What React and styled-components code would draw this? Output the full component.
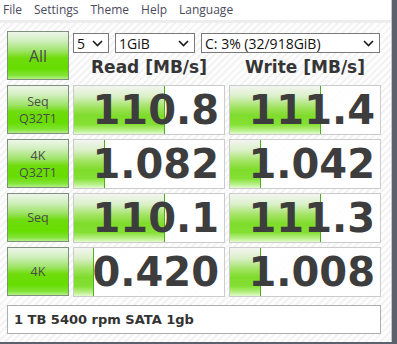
import React from "react";
import styled, { createGlobalStyle } from "styled-components";

const GlobalStyle = createGlobalStyle`
    html, body {
        margin: 0;
        padding: 0;
        background-color: #5c626d;
    }
`

const Window = styled.div`
    width: 391px;
    height: 342px;
    border-right: 1px solid #c4c8ce;
    background-color: #f9f9f9;
    display: flex;
    flex-direction: column;
    overflow: hidden;
`
const MenuBar = styled.div`
    height: 20px;
    display: flex;
    align-items: center;
    gap: 12px;
    padding-left: 3px;
    background-color: #fff;
    border-bottom: 3px solid #ededed;
    font-family: "Open Sans", sans-serif;
    font-size: 12px;
    color: #4a4a5e;
`
const MenuItem = styled.span`
    line-height: 20px;
`
const Main = styled.div`
    flex: 1;
    padding: 8px 0 0 7px;
    background: repeating-linear-gradient(135deg, #fdfdfd 0px, #fdfdfd 3px, #f3f3f3 3px, #f3f3f3 5px);
    display: grid;
    grid-template-columns: 62px 152px 152px;
    grid-auto-rows: 50px;
    column-gap: 4px;
    row-gap: 4px;
    align-content: start;
`
const Top = styled.div`
    grid-column: 2 / 4;
    display: grid;
    grid-template-columns: 152px 152px;
    grid-template-rows: 24px 26px;
    column-gap: 4px;
`
const Selects = styled.div`
    grid-column: 1 / 3;
    display: flex;
    gap: 6px;
    padding-top: 2px;
`
const Select = styled.div`
    width: ${p => p.$w}px;
    height: 20px;
    box-sizing: border-box;
    border: 1px solid #7a7a7a;
    background-color: #fff;
    display: flex;
    align-items: center;
    justify-content: space-between;
    padding: 0 5px 0 3px;
    font-family: "Open Sans", sans-serif;
    font-size: 14px;
    color: #111;
`
const Header = styled.div`
    text-align: center;
    font-family: "DejaVu Sans", sans-serif;
    font-weight: bold;
    font-size: 17px;
    line-height: 24px;
    color: #353535;
`
const TestButton = styled.div`
    height: 49px;
    box-sizing: border-box;
    border: 1px solid #7e8f7c;
    background: linear-gradient(to bottom, #eef6ea 0%, #d2efbf 18%, #9fe46a 40%, #6fdc0c 55%, #66dd00 78%, #80e436 92%, #b4ee86 100%);
    display: flex;
    flex-direction: column;
    align-items: center;
    justify-content: center;
    font-family: "Open Sans", sans-serif;
    font-size: ${p => p.$big ? 16 : 12.5}px;
    color: #4b4b4b;
    text-align: center;
`
const Line = styled.span`
    display: block;
    line-height: 17px;
`
const Cell = styled.div`
    position: relative;
    box-sizing: border-box;
    border: 1px solid #cbcbcb;
    background-color: rgba(255, 255, 255, 0.85);
    overflow: hidden;
`
const Bar = styled.div`
    position: absolute;
    left: 0;
    top: 0;
    bottom: 0;
    border-right: 1px solid #4fae1e;
    background: linear-gradient(to bottom, #f4f6f2 0%, #d9efc6 22%, #9fe35e 45%, #7fdc2a 62%, #84e034 80%, #b6ef85 92%, #e2fbcc 100%);
`
const Value = styled.div`
    position: relative;
    height: 100%;
    display: flex;
    align-items: center;
    justify-content: flex-end;
    padding-right: 5px;
    font-family: "DejaVu Sans", sans-serif;
    font-weight: bold;
    font-size: 40px;
    color: #3d3d3d;
`
const Comment = styled.div`
    grid-column: 1 / 4;
    height: 29px;
    margin-top: 4px;
    box-sizing: border-box;
    border: 1px solid #aeaeae;
    background-color: #fff;
    display: flex;
    align-items: center;
    padding-left: 6px;
    font-family: "DejaVu Sans", sans-serif;
    font-weight: bold;
    font-size: 13px;
    color: #333;
`

const Chevron = () => (
    <svg width="11" height="7" viewBox="0 0 11 7">
        <polyline points="1,1 5.5,5.5 10,1" fill="none" stroke="#1a1a1a" strokeWidth="1.6" />
    </svg>
)

const rows = [
    { label: ["Seq", "Q32T1"], read: "110.8", rp: 0.6, write: "111.4", wp: 0.6 },
    { label: ["4K", "Q32T1"], read: "1.082", rp: 0.2, write: "1.042", wp: 0.2 },
    { label: ["Seq"], read: "110.1", rp: 0.6, write: "111.3", wp: 0.6 },
    { label: ["4K"], read: "0.420", rp: 0.125, write: "1.008", wp: 0.2 },
]

const Result = ({ value, pct }) => (
    <Cell>
        <Bar style={{ width: `${pct * 100}%` }} />
        <Value>{value}</Value>
    </Cell>
)

export default function App() {
    return (
        <>
            <GlobalStyle />
            <Window>
                <MenuBar>
                    <MenuItem>File</MenuItem>
                    <MenuItem>Settings</MenuItem>
                    <MenuItem>Theme</MenuItem>
                    <MenuItem>Help</MenuItem>
                    <MenuItem>Language</MenuItem>
                </MenuBar>
                <Main>
                    <TestButton $big>All</TestButton>
                    <Top>
                        <Selects>
                            <Select $w={36}>5<Chevron /></Select>
                            <Select $w={80}>1GiB<Chevron /></Select>
                            <Select $w={179}>C: 3% (32/918GiB)<Chevron /></Select>
                        </Selects>
                        <Header>Read [MB/s]</Header>
                        <Header>Write [MB/s]</Header>
                    </Top>
                    {rows.map((r, i) => (
                        <React.Fragment key={i}>
                            <TestButton>
                                {r.label.map(l => <Line key={l}>{l}</Line>)}
                            </TestButton>
                            <Result value={r.read} pct={r.rp} />
                            <Result value={r.write} pct={r.wp} />
                        </React.Fragment>
                    ))}
                    <Comment>1 TB 5400 rpm SATA 1gb</Comment>
                </Main>
            </Window>
        </>
    );
}
